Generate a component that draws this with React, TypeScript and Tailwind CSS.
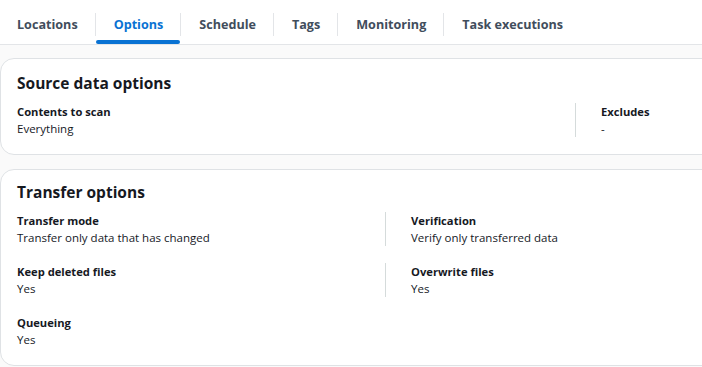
import React from "react";

const font = { fontFamily: '"Open Sans", "Noto Sans", Arial, sans-serif' };

function Field({ label, value, sep }: { label: string; value: string; sep?: boolean }) {
  return (
    <div className={sep ? "border-l border-[#d5dbdb] pl-[25px]" : ""}>
      <div className="text-[11.2px] leading-[17px] font-bold text-[#16191f]">{label}</div>
      <div className="text-[11.5px] leading-[17px] text-[#16191f]">{value}</div>
    </div>
  );
}

export default function App() {
  const tabs = ["Locations", "Options", "Schedule", "Tags", "Monitoring", "Task executions"];
  return (
    <div className="w-[702px] h-[367px] overflow-hidden bg-[#fafafa]" style={font}>
      <div className="flex h-[45px] items-stretch border-b border-[#e3e5e8] bg-white">
        {tabs.map((t, i) => (
          <React.Fragment key={t}>
            {i > 0 && <div className="w-px h-[23px] mt-[13px] bg-[#e3e5e8]" />}
            <div
              className={
                "relative flex items-start pt-[15px] pr-[17px] " + (i === 0 ? "pl-[17px]" : "pl-[18px]")
              }
            >
              <span
                className={
                  "text-[12.6px] leading-[20px] font-bold " +
                  (t === "Options" ? "text-[#0972d3]" : "text-[#414d5c]")
                }
              >
                {t}
              </span>
              {t === "Options" && (
                <div className="absolute left-0 right-0 bottom-0 h-[4px] rounded-full bg-[#0972d3]" />
              )}
            </div>
          </React.Fragment>
        ))}
      </div>
      <div className="pt-[13px] flex flex-col gap-[14px]">
        <div className="w-[740px] rounded-[14px] border border-[#dfe2e5] bg-white pt-[12px] pb-[17px] pl-[16px]">
          <h2 className="text-[15.5px] leading-[24px] font-bold text-[#16191f]">Source data options</h2>
          <div className="mt-[8px] flex">
            <div className="w-[558px]">
              <Field label="Contents to scan" value="Everything" />
            </div>
            <Field label="Excludes" value="-" sep />
          </div>
        </div>
        <div className="w-[740px] rounded-[14px] border border-[#dfe2e5] bg-white pt-[10px] pb-[17px] pl-[16px]">
          <h2 className="text-[15.5px] leading-[24px] font-bold text-[#16191f]">Transfer options</h2>
          <div className="mt-[8px] grid grid-cols-[368px_300px] gap-y-[17px]">
            <Field label="Transfer mode" value="Transfer only data that has changed" />
            <Field label="Verification" value="Verify only transferred data" sep />
            <Field label="Keep deleted files" value="Yes" />
            <Field label="Overwrite files" value="Yes" sep />
            <Field label="Queueing" value="Yes" />
          </div>
        </div>
      </div>
    </div>
  );
}
